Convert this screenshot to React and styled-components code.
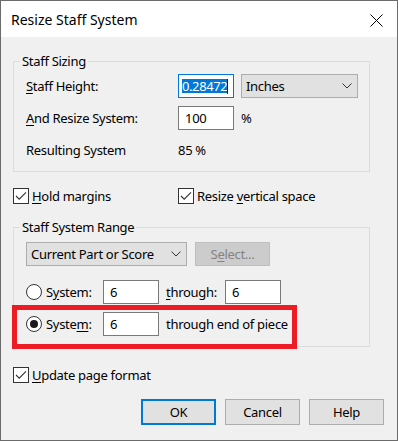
import React from 'react';
import styled, { createGlobalStyle } from 'styled-components';

const Global = createGlobalStyle`
  html, body { margin: 0; padding: 0; background: #fff; }
  body { font-family: "Noto Sans", "Open Sans", sans-serif; }
  *, *::before, *::after { box-sizing: border-box; }
`;

const Window = styled.div`
  width: 398px;
  height: 441px;
  border: 1px solid #6b6b6b;
  background: #f0f0f0;
  display: flex;
  flex-direction: column;
  font-family: "Noto Sans", "Open Sans", sans-serif;
  font-size: 13px;
  letter-spacing: -0.3px;
  color: #000;
`;

const TitleBar = styled.div`
  height: 36px;
  background: #fff;
  display: flex;
  align-items: center;
  justify-content: space-between;
  padding: 2px 14px 0 10px;
`;

const Title = styled.div`
  font-size: 14px;
  letter-spacing: 0;
  line-height: 18px;
`;

const Body = styled.div`
  flex: 1;
  display: flex;
  flex-direction: column;
  padding: 24px 13px 0 12px;
`;

const Group = styled.div`
  position: relative;
  width: 357px;
  border: 1px solid #dcdcdc;
  padding: ${p => p.$pad};
  margin-top: ${p => p.$mt || 0}px;
  display: flex;
  flex-direction: column;
`;

const Legend = styled.span`
  position: absolute;
  left: 6px;
  top: -9px;
  line-height: 16px;
  padding: 0 2px;
  background: #f0f0f0;
`;

const Stack = styled.div`
  display: flex;
  flex-direction: column;
  gap: ${p => p.$gap}px;
  margin-top: ${p => p.$mt || 0}px;
`;

const Row = styled.div`
  position: relative;
  height: 24px;
  display: flex;
  align-items: center;
  gap: ${p => p.$gap || 0}px;
`;

const Label = styled.span`
  width: ${p => p.$w}px;
  flex: none;
  white-space: nowrap;
`;

const Key = styled.span`
  text-decoration: underline;
  text-underline-offset: 2px;
`;

const TextBox = styled.div`
  width: 56px;
  height: 24px;
  flex: none;
  background: #fff;
  border: 1px solid ${p => (p.$focus ? '#0078d7' : '#7a7a7a')};
  display: flex;
  align-items: center;
  padding-left: ${p => (p.$focus ? 3 : 6)}px;
  overflow: hidden;
`;

const Selection = styled.span`
  background: #0078d7;
  color: #fff;
  line-height: 14px;
  height: 14px;
  letter-spacing: -0.4px;
  white-space: nowrap;
`;

const Caret = styled.span`
  width: 1px;
  height: 15px;
  background: #1a1a1a;
  flex: none;
`;

const Combo = styled.div`
  width: ${p => p.$w}px;
  height: 24px;
  flex: none;
  background: #e1e1e1;
  border: 1px solid #adadad;
  display: flex;
  align-items: center;
  justify-content: space-between;
  padding: 0 5px 0 4px;
`;

const PushButton = styled.div`
  width: 75px;
  height: ${p => p.$h || 26}px;
  flex: none;
  display: flex;
  align-items: center;
  justify-content: center;
  background: ${p => (p.$disabled ? '#cccccc' : '#e1e1e1')};
  border: ${p => (p.$default ? '2px solid #0078d7' : p.$disabled ? '1px solid #bfbfbf' : '1px solid #adadad')};
  color: ${p => (p.$disabled ? '#838383' : '#000')};
`;

const CheckRow = styled.div`
  height: 24px;
  display: grid;
  grid-template-columns: 165px auto;
  align-items: center;
  margin-top: ${p => p.$mt}px;
`;

const CheckItem = styled.div`
  display: flex;
  align-items: center;
  gap: 3px;
`;

const Box = styled.span`
  width: 16px;
  height: 16px;
  flex: none;
  background: #fff;
  border: 1px solid #333;
  display: flex;
  align-items: center;
  justify-content: center;
`;

const RadioItem = styled.div`
  width: 70px;
  flex: none;
  display: flex;
  align-items: center;
  gap: 4px;
`;

const Radio = styled.span`
  width: 16px;
  height: 16px;
  flex: none;
  border-radius: 50%;
  background: #fff;
  border: 1px solid #333;
  display: flex;
  align-items: center;
  justify-content: center;
  &::after {
    content: '';
    display: ${p => (p.$on ? 'block' : 'none')};
    width: 8px;
    height: 8px;
    border-radius: 50%;
    background: #1a1a1a;
  }
`;

const Annotation = styled.div`
  position: absolute;
  left: -14px;
  top: -7px;
  width: 285px;
  height: 44px;
  border: 5px solid #ed1c24;
  pointer-events: none;
`;

const ButtonBar = styled.div`
  display: flex;
  justify-content: flex-end;
  gap: 9px;
  margin-top: 12px;
`;

const Chevron = () => (
  <svg width="10" height="6" viewBox="0 0 10 6">
    <path d="M0.5 0.5 L5 5 L9.5 0.5" fill="none" stroke="#333" strokeWidth="1" />
  </svg>
);

const Check = () => (
  <svg width="14" height="14" viewBox="0 0 14 14">
    <path d="M2 7 L5.2 10.2 L12 3.4" fill="none" stroke="#333" strokeWidth="1.1" />
  </svg>
);

const CloseIcon = () => (
  <svg width="13" height="13" viewBox="0 0 13 13">
    <path d="M0.5 0.5 L12.5 12.5 M12.5 0.5 L0.5 12.5" stroke="#000" strokeWidth="1" />
  </svg>
);

const CheckBox = ({ children }) => (
  <CheckItem>
    <Box><Check /></Box>
    <span>{children}</span>
  </CheckItem>
);

export default function App() {
  return (
    <>
      <Global />
      <Window>
        <TitleBar>
          <Title>Resize Staff System</Title>
          <CloseIcon />
        </TitleBar>
        <Body>
          <Group $pad="12px 12px 9px 12px">
            <Legend>Staff Sizing</Legend>
            <Stack $gap={8}>
              <Row $gap={7}>
                <Label $w={145}><Key>S</Key>taff Height:</Label>
                <TextBox $focus>
                  <Selection>0.28472</Selection>
                  <Caret />
                </TextBox>
                <Combo $w={117}>
                  <span>Inches</span>
                  <Chevron />
                </Combo>
              </Row>
              <Row $gap={7}>
                <Label $w={145}><Key>A</Key>nd Resize System:</Label>
                <TextBox>100</TextBox>
                <span>%</span>
              </Row>
              <Row>
                <Label $w={152}>Resulting System</Label>
                <span>85 %</span>
              </Row>
            </Stack>
          </Group>

          <CheckRow $mt={12}>
            <CheckBox><Key>H</Key>old margins</CheckBox>
            <CheckBox>Resize <Key>v</Key>ertical space</CheckBox>
          </CheckRow>

          <Group $mt={19} $pad="14px 12px 10px 12px">
            <Legend>Staff System Range</Legend>
            <Row $gap={8}>
              <Combo $w={161}>
                <span>Current Part or Score</span>
                <Chevron />
              </Combo>
              <PushButton $disabled $h={24}>S<Key>e</Key>lect...</PushButton>
            </Row>
            <Stack $gap={8} $mt={14}>
              <Row $gap={7}>
                <RadioItem>
                  <Radio />
                  <span>S<Key>y</Key>stem:</span>
                </RadioItem>
                <TextBox>6</TextBox>
                <Label $w={52}><Key>t</Key>hrough:</Label>
                <TextBox>6</TextBox>
              </Row>
              <Row $gap={7}>
                <RadioItem>
                  <Radio $on />
                  <span>Syste<Key>m</Key>:</span>
                </RadioItem>
                <TextBox>6</TextBox>
                <span>through end of piece</span>
                <Annotation />
              </Row>
            </Stack>
          </Group>

          <CheckRow $mt={16}>
            <CheckBox><Key>U</Key>pdate page format</CheckBox>
          </CheckRow>

          <ButtonBar>
            <PushButton $default>OK</PushButton>
            <PushButton>Cancel</PushButton>
            <PushButton>Help</PushButton>
          </ButtonBar>
        </Body>
      </Window>
    </>
  );
}
